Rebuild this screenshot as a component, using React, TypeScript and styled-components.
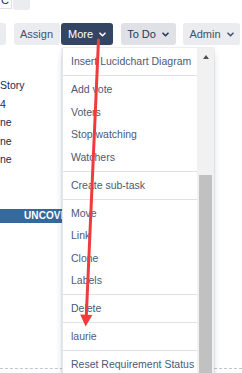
import React from 'react';
import styled, { createGlobalStyle } from 'styled-components';

const GlobalStyle = createGlobalStyle`
  html, body {
    margin: 0;
    padding: 0;
    background: #fff;
  }
  body {
    font-family: "Liberation Sans", Arial, sans-serif;
    font-size: 10.3px;
    color: #172b4d;
    overflow: hidden;
  }
`;

const Page = styled.div`
  position: relative;
  width: 242px;
  height: 373px;
  overflow: hidden;
`;

const EditStrip = styled.div`
  display: flex;
  align-items: flex-end;
  gap: 1px;
  height: 10px;
  overflow: hidden;
`;

const InlineInput = styled.div`
  box-sizing: border-box;
  width: 12px;
  height: 22px;
  margin-bottom: 1px;
  padding: 6px 0 0 1px;
  border: 1px solid #dfe1e6;
  border-left: none;
  font-size: 11px;
  line-height: 12px;
  overflow: hidden;
`;

const InlineAction = styled.div`
  width: 17px;
  height: 22px;
  border-radius: 0 0 3px 3px;
  background: #ebecf0;
  display: flex;
  align-items: flex-start;
  padding: 5px 0 0 4px;
  box-sizing: border-box;
  color: #42526e;
  font-size: 10px;
  line-height: 10px;
`;

const Toolbar = styled.div`
  display: flex;
  align-items: center;
  gap: 7.5px;
  margin-top: 13px;
  margin-left: -40px;
`;

const ButtonGroup = styled.div`
  display: flex;
  gap: 1.5px;
`;

type Variant = 'default' | 'primary' | 'status';

const palette: Record<Variant, { bg: string; fg: string }> = {
  default: { bg: '#ebecf0', fg: '#42526e' },
  primary: { bg: '#344563', fg: '#ffffff' },
  status: { bg: '#dfe1e6', fg: '#253858' },
};

const Button = styled.button<{ $variant?: Variant; $width: number }>`
  display: inline-flex;
  align-items: center;
  justify-content: center;
  gap: 6px;
  box-sizing: border-box;
  width: ${({ $width }) => $width}px;
  height: 22px;
  padding: 0;
  border: none;
  border-radius: 3px;
  background: ${({ $variant = 'default' }) => palette[$variant].bg};
  color: ${({ $variant = 'default' }) => palette[$variant].fg};
  font-family: inherit;
  font-size: 11px;
`;

const Chevron = () => (
  <svg width="7" height="5" viewBox="0 0 7 5">
    <path d="M1 1.2 L3.5 3.7 L6 1.2" fill="none" stroke="currentColor" strokeWidth="1.6" strokeLinecap="round" strokeLinejoin="round" />
  </svg>
);

const Content = styled.div`
  padding-top: 31px;
`;

const DetailList = styled.div`
  display: flex;
  flex-direction: column;
`;

const DetailValue = styled.div`
  height: 18.5px;
  line-height: 18.5px;
  white-space: nowrap;
  font-size: 10.5px;
`;

const StatusBar = styled.div`
  margin-top: 40.5px;
  width: 120px;
  height: 14px;
  line-height: 14px;
  padding-left: 24px;
  background: #36699b;
  color: #fff;
  font-weight: bold;
  font-size: 10px;
  letter-spacing: 0.1px;
`;

const DashedRule = styled.div`
  margin-top: 145px;
  border-top: 1px dashed #c1c7d0;
`;

const Menu = styled.div`
  position: absolute;
  top: 48px;
  left: 62px;
  width: 152px;
  height: 340px;
  display: flex;
  background: #fff;
  box-shadow: 0 4px 8px -2px rgba(9, 30, 66, 0.25), 0 0 1px rgba(9, 30, 66, 0.35);
`;

const MenuList = styled.div`
  flex: 1;
  min-width: 0;
  border-left: 1px solid #e4e6ea;
`;

const MenuGroup = styled.div`
  padding: 2.25px 0;
  border-bottom: 1px solid #dfe1e6;
  &:last-child {
    border-bottom: none;
  }
`;

const MenuItem = styled.div`
  height: 22.5px;
  line-height: 22.5px;
  padding-left: 8px;
  color: #4a5a78;
  font-size: 10.5px;
  white-space: nowrap;
  overflow: hidden;
`;

const Scrollbar = styled.div`
  width: 17px;
  background: #f1f1f1;
  display: flex;
  flex-direction: column;
  align-items: center;
`;

const ScrollArrow = styled.div`
  height: 17px;
  display: flex;
  align-items: center;
  justify-content: center;
  &::before {
    content: '';
    border-left: 3.5px solid transparent;
    border-right: 3.5px solid transparent;
    border-bottom: 4px solid #505050;
  }
`;

const ScrollThumb = styled.div`
  margin-top: 110px;
  width: 13px;
  flex: 1;
  background: #c1c1c1;
`;

const Annotation = styled.svg`
  position: absolute;
  inset: 0;
  pointer-events: none;
`;

const menuGroups = [
  ['Insert Lucidchart Diagram'],
  ['Add vote', 'Voters', 'Stop watching', 'Watchers'],
  ['Create sub-task'],
  ['Move', 'Link', 'Clone', 'Labels'],
  ['Delete'],
  ['laurie'],
  ['Reset Requirement Status'],
];

const details = ['Story', '4', 'ne', 'ne', 'ne'];

export default function App() {
  return (
    <Page>
      <GlobalStyle />
      <EditStrip>
        <InlineInput>C</InlineInput>
        <InlineAction>✕</InlineAction>
      </EditStrip>

      <Toolbar>
        <Button $width={46}>Edit</Button>
        <ButtonGroup>
          <Button $width={46}>Assign</Button>
          <Button $variant="primary" $width={52}>
            More <Chevron />
          </Button>
        </ButtonGroup>
        <Button $variant="status" $width={55}>
          To Do <Chevron />
        </Button>
        <Button $width={57}>
          Admin <Chevron />
        </Button>
      </Toolbar>

      <Content>
        <DetailList>
          {details.map((d, i) => (
            <DetailValue key={i}>{d}</DetailValue>
          ))}
        </DetailList>
        <StatusBar>UNCOVERED</StatusBar>
        <DashedRule />
      </Content>

      <Menu>
        <MenuList>
          {menuGroups.map((group, gi) => (
            <MenuGroup key={gi}>
              {group.map((label) => (
                <MenuItem key={label}>{label}</MenuItem>
              ))}
            </MenuGroup>
          ))}
        </MenuList>
        <Scrollbar>
          <ScrollArrow />
          <ScrollThumb />
        </Scrollbar>
      </Menu>

      <Annotation width="242" height="373" viewBox="0 0 242 373">
        <line x1="98.5" y1="40" x2="86.3" y2="316" stroke="#ef3b3e" strokeWidth="3" strokeLinecap="round" />
        <polygon points="80.2,314.5 92.4,315 85.6,326.5" fill="#ef3b3e" />
      </Annotation>
    </Page>
  );
}
